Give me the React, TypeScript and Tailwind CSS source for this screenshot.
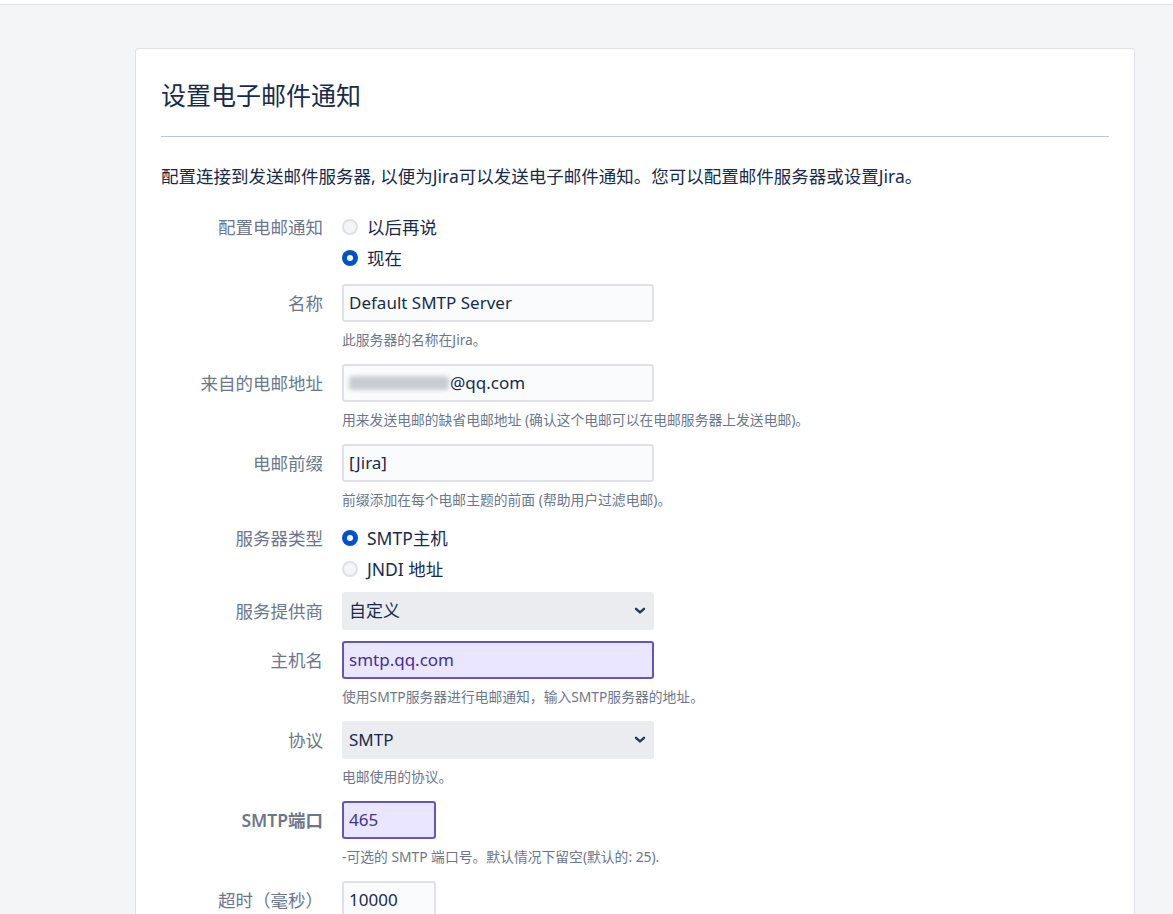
import React from 'react';

const FONT = { fontFamily: '"Noto Sans", "Noto Sans CJK SC", sans-serif' };

interface RadioProps {
  label: string;
  checked?: boolean;
}

const Radio: React.FC<RadioProps> = ({ label, checked }) => (
  <div className="flex items-center h-[31px] gap-[9px]">
    {checked ? (
      <span className="w-[16px] h-[16px] rounded-full bg-[#0052cc] flex items-center justify-center">
        <span className="w-[6px] h-[6px] rounded-full bg-white" />
      </span>
    ) : (
      <span className="w-[16px] h-[16px] rounded-full bg-[#f4f5f7] border-2 border-[#dfe1e6]" />
    )}
    <span className="text-[17.5px] leading-[24px] text-[#172b4d]">{label}</span>
  </div>
);

interface RowProps {
  label: string;
  labelH?: string;
  bold?: boolean;
  className?: string;
  children: React.ReactNode;
}

const Row: React.FC<RowProps> = ({ label, labelH = 'h-[38px]', bold, className = '', children }) => (
  <div className={`grid grid-cols-[162px_1fr] gap-x-[19px] ${className}`}>
    <div
      className={`${labelH} flex items-center justify-end text-[17.5px] leading-[24px] text-[#6b778c] ${
        bold ? 'font-semibold' : ''
      }`}
    >
      {label}
    </div>
    <div>{children}</div>
  </div>
);

const Help: React.FC<{ children: React.ReactNode }> = ({ children }) => (
  <p className="mt-[10px] text-[13.8px] leading-[16px] text-[#6b778c]">{children}</p>
);

interface InputProps {
  value?: React.ReactNode;
  focused?: boolean;
  width?: string;
}

const Input: React.FC<InputProps> = ({ value, focused, width = 'w-[312px]' }) => (
  <div
    className={`${width} h-[38px] rounded-[3px] border-2 pl-[5px] flex items-center text-[17px] ${
      focused ? 'bg-[#eae6ff] border-[#6554c0] text-[#403294]' : 'bg-[#fafbfc] border-[#dfe1e6] text-[#172b4d]'
    }`}
  >
    {value}
  </div>
);

const Select: React.FC<{ value: string }> = ({ value }) => (
  <div className="w-[312px] h-[38px] rounded-[3px] bg-[#ebecf0] pl-[7px] pr-[8px] flex items-center justify-between text-[17px] text-[#172b4d]">
    <span>{value}</span>
    <svg width="12" height="8" viewBox="0 0 12 8" fill="none">
      <path d="M2 1.8l4 3.6 4-3.6" stroke="#253858" strokeWidth="2.4" strokeLinecap="round" strokeLinejoin="round" />
    </svg>
  </div>
);

export default function App() {
  return (
    <div className="min-h-screen bg-[#f4f5f7] pb-10" style={FONT}>
      {/* Top strip */}
      <div className="h-[5px] bg-white border-b border-[#dfe1e6]" />

      {/* Card */}
      <div className="ml-[135px] mt-[43px] w-[1000px] bg-white border border-[#dfe1e6] rounded-[3px] px-[25px] pt-[30px] pb-[40px]">
        <h1 className="text-[25px] leading-[32px] text-[#172b4d] font-normal">设置电子邮件通知</h1>
        <div className="mt-[25px] h-px bg-[#c1c7d0]" />
        <p className="mt-[27px] text-[17.5px] leading-[24px] text-[#172b4d]">
          配置连接到发送邮件服务器, 以便为Jira可以发送电子邮件通知。您可以配置邮件服务器或设置Jira。
        </p>

        {/* Form */}
        <Row label="配置电邮通知" labelH="h-[31px]" className="mt-[23px]">
          <Radio label="以后再说" />
          <Radio label="现在" checked />
        </Row>

        <Row label="名称" className="mt-[11px]">
          <Input value="Default SMTP Server" />
          <Help>此服务器的名称在Jira。</Help>
        </Row>

        <Row label="来自的电邮地址" className="mt-[16px]">
          <Input
            value={
              <span className="flex items-center">
                <span className="w-[100px] h-[14px] bg-[#c8ccd3] blur-[2px] rounded-sm" />
                <span className="ml-[1px]">@qq.com</span>
              </span>
            }
          />
          <Help>用来发送电邮的缺省电邮地址 (确认这个电邮可以在电邮服务器上发送电邮)。</Help>
        </Row>

        <Row label="电邮前缀" className="mt-[16px]">
          <Input value="[Jira]" />
          <Help>前缀添加在每个电邮主题的前面 (帮助用户过滤电邮)。</Help>
        </Row>

        <Row label="服务器类型" labelH="h-[31px]" className="mt-[14px]">
          <Radio label="SMTP主机" checked />
          <Radio label="JNDI 地址" />
        </Row>

        <Row label="服务提供商" className="mt-[8px]">
          <Select value="自定义" />
        </Row>

        <Row label="主机名" className="mt-[11px]">
          <Input value="smtp.qq.com" focused />
          <Help>使用SMTP服务器进行电邮通知，输入SMTP服务器的地址。</Help>
        </Row>

        <Row label="协议" className="mt-[16px]">
          <Select value="SMTP" />
          <Help>电邮使用的协议。</Help>
        </Row>

        <Row label="SMTP端口" bold className="mt-[16px]">
          <Input value="465" focused width="w-[94px]" />
          <Help>-可选的 SMTP 端口号。默认情况下留空(默认的: 25).</Help>
        </Row>

        <Row label="超时（毫秒）" className="mt-[16px]">
          <Input value="10000" width="w-[94px]" />
        </Row>
      </div>
    </div>
  );
}
